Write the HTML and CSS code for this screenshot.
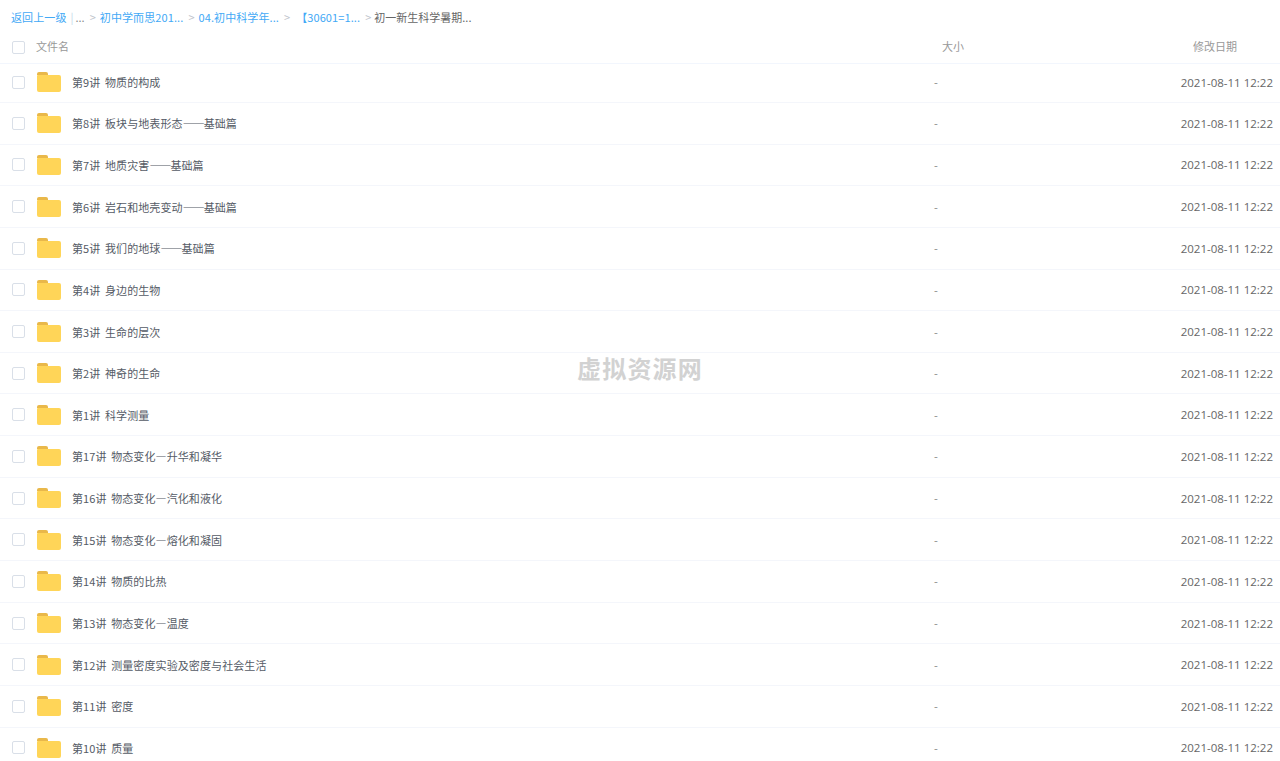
FILE: index.html
```html
<!DOCTYPE html>
<html lang="zh-CN">
<head>
  <meta charset="UTF-8" />
  <title>文件列表</title>
  <link rel="stylesheet" href="styles.css">
</head>
<body>
  <svg width="0" height="0" class="defs">
    <symbol id="folder" viewBox="0 0 24 20">
      <path d="M0 2a2 2 0 0 1 2-2h7a2 2 0 0 1 2 2v1H0z" fill="#e9b84a"/>
      <path d="M0 4a1 1 0 0 1 1-1h21a2 2 0 0 1 2 2v13a2 2 0 0 1-2 2H2a2 2 0 0 1-2-2z" fill="#ffd558"/>
    </symbol>
  </svg>

  <div class="crumbs">
    <a>返回上一级</a><span class="bar">|</span><span class="more">...</span>
    <span class="sep">&gt;</span><a>初中学而思201...</a>
    <span class="sep">&gt;</span><a>04.初中科学年...</a>
    <span class="sep">&gt;</span><a class="wide">【30601=1...</a>
    <span class="sep last">&gt;</span><span class="current">初一新生科学暑期...</span>
  </div>

  <div class="head row-grid">
    <span class="check"></span>
    <span class="head-name">文件名</span>
    <span class="head-size">大小</span>
    <span class="head-date">修改日期</span>
  </div>

  <div class="list">
    <div class="row row-grid first"><span class="check"></span><div class="name"><svg class="icon"><use href="#folder"/></svg><span>第9讲 物质的构成</span></div><span class="size">-</span><span class="date">2021-08-11 12:22</span></div>
    <div class="row row-grid"><span class="check"></span><div class="name"><svg class="icon"><use href="#folder"/></svg><span>第8讲 板块与地表形态<i class="dash">——</i>基础篇</span></div><span class="size">-</span><span class="date">2021-08-11 12:22</span></div>
    <div class="row row-grid"><span class="check"></span><div class="name"><svg class="icon"><use href="#folder"/></svg><span>第7讲 地质灾害<i class="dash">——</i>基础篇</span></div><span class="size">-</span><span class="date">2021-08-11 12:22</span></div>
    <div class="row row-grid"><span class="check"></span><div class="name"><svg class="icon"><use href="#folder"/></svg><span>第6讲 岩石和地壳变动<i class="dash">——</i>基础篇</span></div><span class="size">-</span><span class="date">2021-08-11 12:22</span></div>
    <div class="row row-grid"><span class="check"></span><div class="name"><svg class="icon"><use href="#folder"/></svg><span>第5讲 我们的地球<i class="dash">——</i>基础篇</span></div><span class="size">-</span><span class="date">2021-08-11 12:22</span></div>
    <div class="row row-grid"><span class="check"></span><div class="name"><svg class="icon"><use href="#folder"/></svg><span>第4讲 身边的生物</span></div><span class="size">-</span><span class="date">2021-08-11 12:22</span></div>
    <div class="row row-grid"><span class="check"></span><div class="name"><svg class="icon"><use href="#folder"/></svg><span>第3讲 生命的层次</span></div><span class="size">-</span><span class="date">2021-08-11 12:22</span></div>
    <div class="row row-grid"><span class="check"></span><div class="name"><svg class="icon"><use href="#folder"/></svg><span>第2讲 神奇的生命</span></div><span class="size">-</span><span class="date">2021-08-11 12:22</span></div>
    <div class="row row-grid"><span class="check"></span><div class="name"><svg class="icon"><use href="#folder"/></svg><span>第1讲 科学测量</span></div><span class="size">-</span><span class="date">2021-08-11 12:22</span></div>
    <div class="row row-grid"><span class="check"></span><div class="name"><svg class="icon"><use href="#folder"/></svg><span>第17讲 物态变化—升华和凝华</span></div><span class="size">-</span><span class="date">2021-08-11 12:22</span></div>
    <div class="row row-grid"><span class="check"></span><div class="name"><svg class="icon"><use href="#folder"/></svg><span>第16讲 物态变化—汽化和液化</span></div><span class="size">-</span><span class="date">2021-08-11 12:22</span></div>
    <div class="row row-grid"><span class="check"></span><div class="name"><svg class="icon"><use href="#folder"/></svg><span>第15讲 物态变化—熔化和凝固</span></div><span class="size">-</span><span class="date">2021-08-11 12:22</span></div>
    <div class="row row-grid"><span class="check"></span><div class="name"><svg class="icon"><use href="#folder"/></svg><span>第14讲 物质的比热</span></div><span class="size">-</span><span class="date">2021-08-11 12:22</span></div>
    <div class="row row-grid"><span class="check"></span><div class="name"><svg class="icon"><use href="#folder"/></svg><span>第13讲 物态变化—温度</span></div><span class="size">-</span><span class="date">2021-08-11 12:22</span></div>
    <div class="row row-grid"><span class="check"></span><div class="name"><svg class="icon"><use href="#folder"/></svg><span>第12讲 测量密度实验及密度与社会生活</span></div><span class="size">-</span><span class="date">2021-08-11 12:22</span></div>
    <div class="row row-grid"><span class="check"></span><div class="name"><svg class="icon"><use href="#folder"/></svg><span>第11讲 密度</span></div><span class="size">-</span><span class="date">2021-08-11 12:22</span></div>
    <div class="row row-grid"><span class="check"></span><div class="name"><svg class="icon"><use href="#folder"/></svg><span>第10讲 质量</span></div><span class="size">-</span><span class="date">2021-08-11 12:22</span></div>
  </div>

  <div class="watermark">虚拟资源网</div>
</body>
</html>
```

FILE: styles.css
```css
html, body {
  height: 100%;
}

body {
  margin: 0;
  overflow: hidden;
  background-color: #fff;
  color: #666;
  font-family: "Noto Sans CJK SC", "Noto Sans", sans-serif;
  font-size: 11px;
  position: relative;
}

.defs {
  position: absolute;
}

.crumbs {
  display: flex;
  align-items: center;
  height: 34px;
  padding-left: 11px;
  white-space: nowrap;
}

.crumbs a {
  color: #42a9f6;
  letter-spacing: 0.1px;
}

.crumbs .bar {
  color: #c4d8e8;
  margin: 0 2px 0 4px;
}

.crumbs .more {
  color: #888;
}

.crumbs .sep {
  color: #c0c4cc;
  margin: 0 4px 0 5px;
}

.crumbs .sep.last {
  margin-right: 3px;
}

.crumbs .wide {
  margin-left: 2px;
}

.crumbs .current {
  color: #666;
}

.row-grid {
  display: grid;
  grid-template-columns: 24px 860px 1fr auto;
  align-items: center;
  padding: 0 7px 0 12px;
}

.head {
  height: 30px;
  padding-bottom: 5px;
  color: #999;
  border-bottom: 1px solid #f2f6fd;
  box-sizing: border-box;
}

.head .check {
  margin-top: 3px;
}

.head-size {
  padding-left: 46px;
}

.head-date {
  padding-right: 36px;
}

.check {
  display: block;
  width: 11px;
  height: 11px;
  border: 1px solid #d9dfe8;
  border-radius: 2px;
}

.row {
  height: 41.65px;
  box-sizing: border-box;
  border-bottom: 1px solid #f4f6fb;
}

.row.first {
  height: 39px;
  padding-bottom: 2px;
}

.name {
  display: flex;
  align-items: center;
  color: #555b66;
  letter-spacing: 0.1px;
  word-spacing: 2px;
}

.dash {
  font-style: normal;
  letter-spacing: -1px;
}

.icon {
  width: 24px;
  height: 20px;
  margin: 0 11px 0 1px;
  flex: none;
}

.size {
  color: #888;
  padding-left: 38px;
}

.date {
  color: #666;
  font-size: 11.5px;
  font-family: "Open Sans", sans-serif;
}

.watermark {
  position: absolute;
  left: 577px;
  top: 353px;
  color: #d2d2d2;
  font-size: 24px;
  font-weight: 700;
  letter-spacing: 1.2px;
  line-height: 30px;
  white-space: nowrap;
}
```
